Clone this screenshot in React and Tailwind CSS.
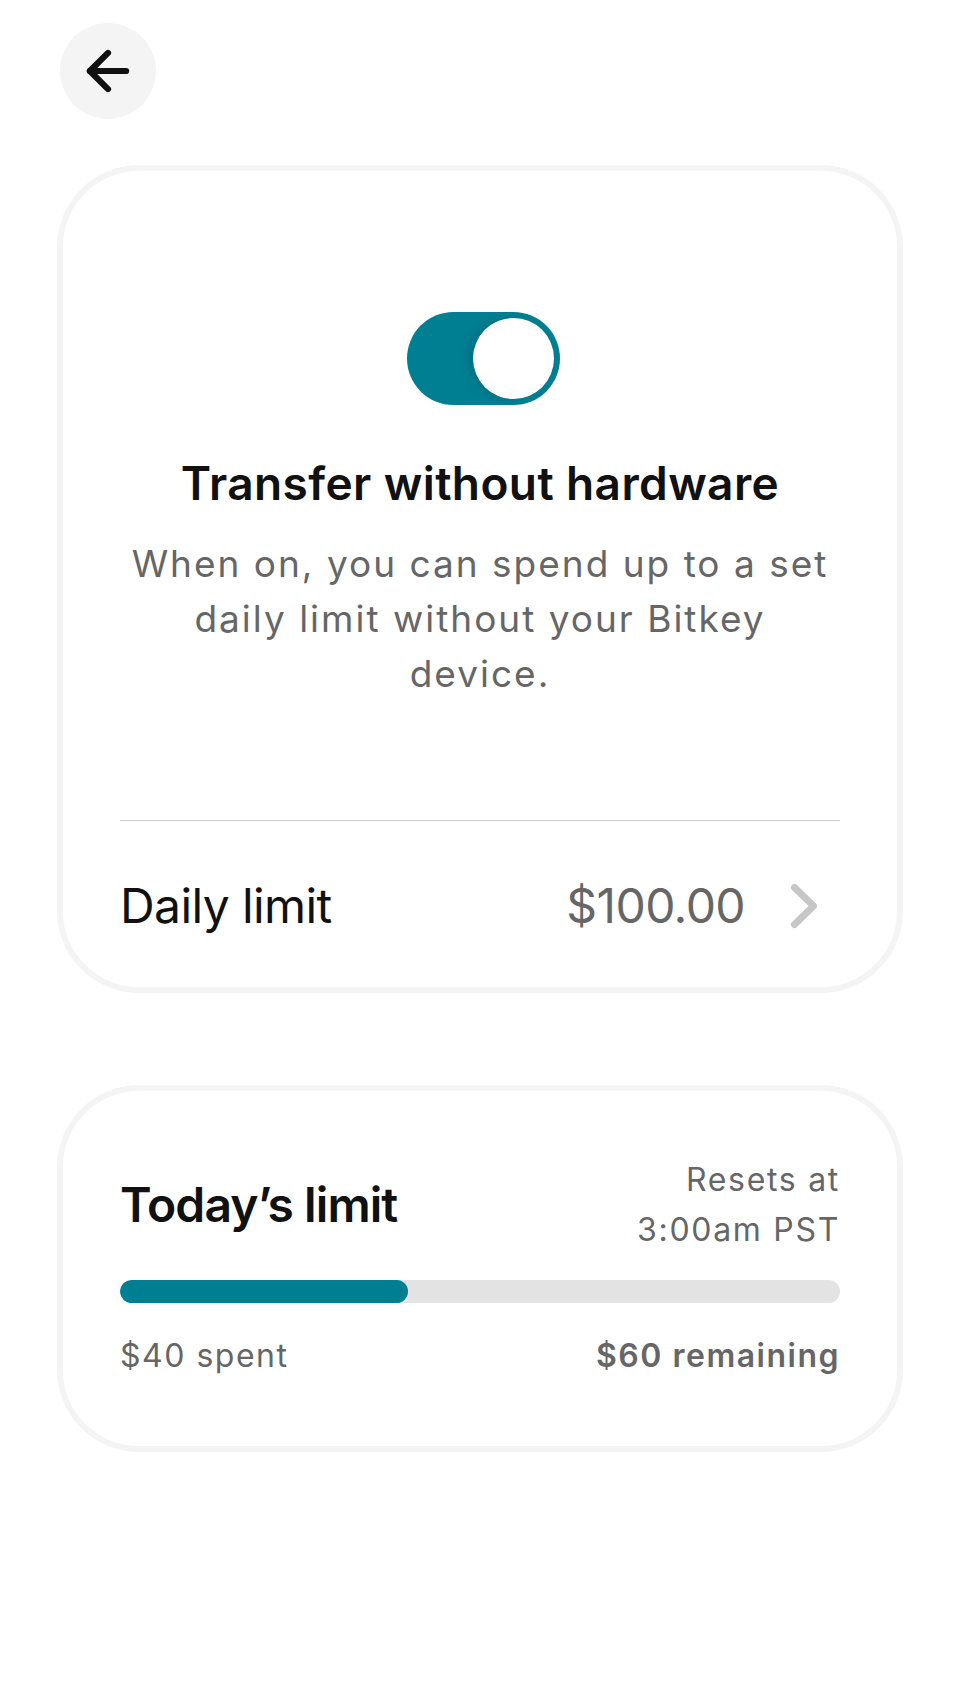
import React, { useState } from 'react';
import { ArrowLeft } from 'lucide-react';

export default function App() {
  const [enabled, setEnabled] = useState(true);
  const spent = 40;
  const limit = 100;

  return (
    <div className="min-h-[1704px] bg-white px-[57px] pt-[23px] font-['Inter',sans-serif]">
      {/* back */}
      <button className="ml-[3px] flex h-[96px] w-[96px] items-center justify-center rounded-full bg-[#f4f4f4] text-[#111]">
        <ArrowLeft size={62} strokeWidth={2.4} />
      </button>

      {/* toggle card */}
      <div className="mt-[46px] rounded-[82px] border-[6px] border-[#f4f4f4] px-[57px] pt-[141px] pb-[52px]">
        <div className="flex justify-center pl-[7px]">
          <button
            onClick={() => setEnabled(!enabled)}
            className="flex h-[93px] w-[153px] items-center justify-end rounded-full bg-[#007f93] px-[6px]"
          >
            <span className="h-[81px] w-[81px] rounded-full bg-white shadow-[-5px_0_9px_rgba(0,60,70,0.22)]"></span>
          </button>
        </div>

        <h1 className="mt-[50px] text-center text-[46px] leading-[56px] font-semibold tracking-[0.4px] text-[#111]">
          Transfer without hardware
        </h1>
        <p className="mt-[25px] text-center text-[37px] leading-[55px] tracking-[2px] text-[#666]">
          When on, you can spend up to a set
          <br />
          daily limit without your Bitkey
          <br />
          device.
        </p>

        <div className="mt-[119px] h-px bg-[#cbcbcb]"></div>

        <div className="mt-[56px] flex items-center text-[48px] leading-[58px] tracking-[-0.6px]">
          <span className="flex-1 text-[#111]">Daily limit</span>
          <span className="text-[#666]">$100.00</span>
          <svg className="ml-[42px] mr-[19px]" width="34" height="50" viewBox="0 0 34 50" fill="none">
            <path d="M7.5 6.5 26.5 25 7.5 43.5" stroke="#c6c6c6" strokeWidth="7" strokeLinecap="round" strokeLinejoin="round" />
          </svg>
        </div>
      </div>

      {/* today's limit card */}
      <div className="mt-[92px] rounded-[82px] border-[6px] border-[#f4f4f4] px-[57px] pt-[64px] pb-[66px]">
        <div className="flex items-center justify-between">
          <h2 className="text-[48px] leading-[58px] font-semibold tracking-[-0.9px] text-[#111]">Today’s limit</h2>
          <div className="text-right text-[32px] leading-[50px] tracking-[1.7px] text-[#666]">
            Resets at
            <br />
            3:00am PST
          </div>
        </div>

        <div className="mt-[25px] h-[23px] overflow-hidden rounded-full bg-[#e3e3e3]">
          <div className="h-full rounded-full bg-[#007f93]" style={{ width: `${(spent / limit) * 100}%` }}></div>
        </div>

        <div className="mt-[29px] flex justify-between text-[32px] leading-[48px] tracking-[1.5px] text-[#666]">
          <span>${spent} spent</span>
          <span className="font-semibold">${limit - spent} remaining</span>
        </div>
      </div>
    </div>
  );
}
